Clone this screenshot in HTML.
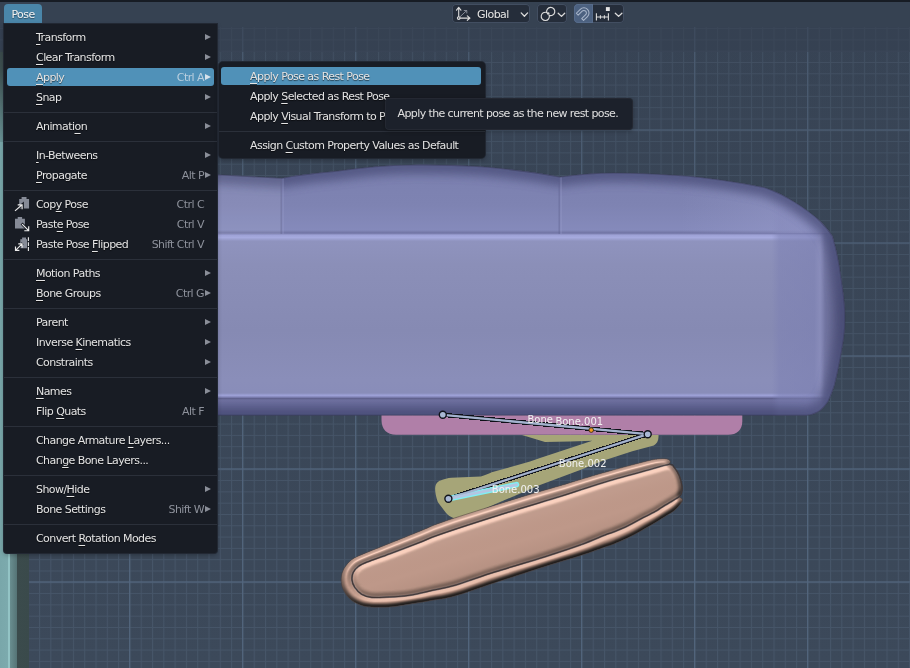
<!DOCTYPE html>
<html lang="en">
<head>
<meta charset="utf-8">
<title>Blender - Pose menu</title>
<style>
html,body{margin:0;padding:0;}
body{width:910px;height:668px;overflow:hidden;position:relative;background:#3a4757;font-family:"DejaVu Sans","Liberation Sans",sans-serif;font-size:11px;letter-spacing:-0.56px;color:#e4e4e4;}
#vp{position:absolute;left:0;top:0;width:910px;height:668px;}
#topband{position:absolute;left:0;top:0;width:910px;height:2px;background:#171c24;}
#hdr{position:absolute;left:0;top:2px;width:910px;height:25px;background:#364252;}
#hdr2{position:absolute;left:0;top:27px;width:910px;height:25px;background:rgba(52,64,80,0.55);}
.pose{position:absolute;left:4px;top:4px;width:38px;height:19px;background:#4a86a9;border-radius:4px 4px 0 0;line-height:22px;text-align:center;color:#f2f2f2;text-shadow:0 1px 1px rgba(0,0,0,.45);}
.menu{position:absolute;background:#181c24;border-radius:0 3px 3px 3px;box-shadow:0 0 0 1px #222833,0 2px 5px rgba(0,0,0,.3);}
#m1{left:4px;top:24px;width:213px;height:529px;border-radius:0 0 3px 3px;}
#m2{left:219px;top:62px;width:266px;height:96px;border-radius:4px;}
.mi{position:absolute;left:3px;width:207px;height:18px;line-height:20px;border-radius:3px;white-space:nowrap;}
.mi .lb{position:absolute;left:29px;top:0px;text-shadow:0 1px 1px rgba(0,0,0,.6);}
.mi.hl{background:#5091b8;}
.mi .sc{position:absolute;right:10px;top:0px;color:#8d919b;}
.mi .sc.na{right:10px;}
.mi.hl .sc{color:#b9cfdf;}
.mi .ar{position:absolute;right:3px;top:6px;width:0;height:0;border-left:6px solid #8a8e98;border-top:3.5px solid transparent;border-bottom:3.5px solid transparent;}
.mi.hl .ar{border-left-color:#d5e2ec;}
.mi .ic{position:absolute;left:8px;top:0px;overflow:visible;}
.mi u{text-decoration:underline;text-underline-offset:3px;text-decoration-thickness:1px;}
.sep{position:absolute;left:0;width:100%;height:1px;background:#2b303a;}
#m2 .mi{left:2px;width:260px;}
#m2 .mi .lb{left:29px;}
#tip{position:absolute;left:384.5px;top:97.5px;width:247.5px;height:31.5px;background:#1c212b;border-radius:4px;box-shadow:inset 0 0 0 1px rgba(255,255,255,.035),0 1px 4px rgba(0,0,0,.3);line-height:32px;letter-spacing:-0.6px;}
#tip span{position:absolute;left:12.5px;top:0px;white-space:nowrap;color:#e0e0e0;}
.w{position:absolute;top:4px;height:19px;background:#252d3a;border-radius:4px;box-shadow:inset 0 0 0 1px #424e61;overflow:hidden;}
.gl{position:absolute;left:477px;top:5px;height:19px;line-height:20px;color:#e6e6e6;text-shadow:0 1px 1px rgba(0,0,0,.4);}
.menu,.pose,.gl,#tip,#vp{will-change:transform;}
</style>
</head>
<body>
<svg id="vp" width="910" height="668" viewBox="0 0 910 668">
<defs>
<linearGradient id="bgG" x1="0" y1="0" x2="0" y2="1"><stop offset="0" stop-color="#374354"/><stop offset="1" stop-color="#3c495a"/></linearGradient>
<linearGradient id="bgFade" x1="0" y1="0" x2="0" y2="1"><stop offset="0" stop-color="#384455" stop-opacity="0.4"/><stop offset="0.75" stop-color="#3b4859" stop-opacity="0"/></linearGradient>
<pattern id="gmin" x="5.1" y="5.5" width="11.3" height="11.3" patternUnits="userSpaceOnUse">
<path d="M0.5 0V11.3M0 0.5H11.3" stroke="#465568" stroke-width="1.1" fill="none"/>
</pattern>
<pattern id="gmaj" x="16.1" y="16.4" width="113" height="113" patternUnits="userSpaceOnUse">
<path d="M0.5 0V113M0 0.5H113" stroke="#53667e" stroke-width="1.3" fill="none"/>
</pattern>
</defs>
<rect width="910" height="668" fill="url(#bgG)"/>
<rect width="910" height="668" fill="url(#gmin)"/>
<rect width="910" height="668" fill="url(#gmaj)"/>
<rect width="910" height="668" fill="url(#bgFade)"/>
<defs>
<linearGradient id="cushV" gradientUnits="userSpaceOnUse" x1="0" y1="164" x2="0" y2="416">
<stop offset="0" stop-color="#7b80ae"/>
<stop offset="0.06" stop-color="#7c81b0"/>
<stop offset="0.16" stop-color="#7e83b2"/>
<stop offset="0.262" stop-color="#858abb"/>
<stop offset="0.274" stop-color="#7073a3"/>
<stop offset="0.282" stop-color="#9ea2d6"/>
<stop offset="0.292" stop-color="#a6aade"/>
<stop offset="0.306" stop-color="#8f93be"/>
<stop offset="0.40" stop-color="#8b8fb8"/>
<stop offset="0.66" stop-color="#868ab3"/>
<stop offset="0.857" stop-color="#8a8eb9"/>
<stop offset="0.909" stop-color="#898db9"/>
<stop offset="0.918" stop-color="#9fa3d9"/>
<stop offset="0.925" stop-color="#8587b8"/>
<stop offset="0.9305" stop-color="#60628e"/>
<stop offset="0.9365" stop-color="#7173a2"/>
<stop offset="0.968" stop-color="#6a6b9a"/>
<stop offset="0.988" stop-color="#5d5e89"/>
<stop offset="0.998" stop-color="#4c4d72"/>
</linearGradient>
<linearGradient id="cushR" gradientUnits="userSpaceOnUse" x1="740" y1="0" x2="846" y2="0">
<stop offset="0.30" stop-color="#7c80b3" stop-opacity="0"/>
<stop offset="0.37" stop-color="#7c80b3" stop-opacity="0.5"/>
<stop offset="0.70" stop-color="#7b7fb2" stop-opacity="0.6"/>
<stop offset="0.755" stop-color="#898cbd" stop-opacity="0.6"/>
<stop offset="0.80" stop-color="#6f729f" stop-opacity="0.85"/>
<stop offset="0.90" stop-color="#5c5e87" stop-opacity="0.92"/>
<stop offset="1" stop-color="#3f405f" stop-opacity="0.97"/>
</linearGradient>
<linearGradient id="cushS" gradientUnits="userSpaceOnUse" x1="680" y1="0" x2="800" y2="0">
<stop offset="0" stop-color="#a3a6d4" stop-opacity="0"/><stop offset="1" stop-color="#a3a6d4" stop-opacity="0.32"/></linearGradient>
<filter id="blur3" filterUnits="userSpaceOnUse" x="0" y="140" width="880" height="300"><feGaussianBlur stdDeviation="5"/></filter>
<clipPath id="cushClip"><path id="cushP" d="M30 176 L218 174.7 L282 178.3 C300 174.5 318 173 336 171.3 C362 167.5 388 165.3 411 165 C436 164.5 460 165.5 482 166.8 C508 169 534 172 560 177 C578 174.5 596 173 614 173 C640 173.2 664 174.5 686 176 C714 178.5 742 183 765 187.7 C776 191.5 786 196.5 795 202.4 C804 208 813 214.5 820 221 C825 226 829 231 832.4 236 C836 248 839 262 840.8 276 C843 290 845 304 845 318 C845 330 843.5 341 841.6 351 C839.5 363 837 375 834.5 385 C832.5 391 830.5 396.5 828 401.5 C825 406 822 409.5 817.7 412 C814.5 413.8 811 414.8 807 415.3 L30 415.3 Z"/></clipPath>
<linearGradient id="peachG" gradientUnits="userSpaceOnUse" x1="500" y1="495" x2="524" y2="575">
<stop offset="0" stop-color="#fff" stop-opacity="0.10"/>
<stop offset="0.35" stop-color="#fff" stop-opacity="0.03"/>
<stop offset="0.6" stop-color="#402a20" stop-opacity="0.0"/>
<stop offset="1" stop-color="#402a20" stop-opacity="0.12"/>
</linearGradient>
<mask id="peachMask" maskUnits="userSpaceOnUse" x="330" y="450" width="360" height="165">
<path d="M341.2 581.4C341.0 578.4 341.4 575.1 342.3 572.4C343.2 569.6 344.6 567.3 346.5 564.9C348.4 562.5 350.4 560.3 353.9 558.2C357.4 556.1 361.4 554.7 367.4 552.2C373.4 549.7 381.2 546.7 389.9 543.2C398.6 539.7 411.4 534.6 419.8 531.2C428.2 527.8 429.6 526.5 440.0 522.9C450.4 519.2 467.9 513.8 481.9 509.3C495.9 504.9 510.8 500.1 523.8 496.2C536.8 492.3 550.4 488.5 560.0 485.7C569.6 482.9 573.8 481.5 581.5 479.2C589.2 476.9 595.2 475.0 606.0 472.0C616.8 469.0 637.0 463.5 646.0 461.3C655.0 459.1 656.4 459.2 660.0 458.8C663.6 458.4 666.0 458.8 667.7 459.2C669.4 459.6 670.0 460.6 670.3 461.5C670.6 462.4 669.1 463.4 669.7 464.3C670.3 465.2 672.2 465.0 673.8 466.9C675.4 468.8 677.8 472.2 679.2 475.4C680.6 478.6 681.6 483.3 682.0 486.2C682.4 489.1 681.9 491.3 681.5 493.0C681.1 494.7 679.3 495.6 679.4 496.6C679.5 497.6 681.9 498.2 682.3 499.2C682.6 500.2 682.7 500.7 681.5 502.5C680.3 504.3 677.4 507.9 675.0 510.0C672.6 512.1 670.3 513.2 667.0 515.3C663.7 517.4 659.4 520.2 655.0 522.8C650.6 525.4 645.5 528.3 640.9 530.9C636.3 533.5 631.9 535.9 627.4 538.1C622.9 540.3 617.7 542.4 614.0 543.9C610.3 545.4 610.4 545.1 605.0 547.0C599.6 548.9 591.5 552.0 581.5 555.3C571.5 558.5 559.4 561.9 545.0 566.5C530.6 571.1 510.0 577.8 495.0 582.7C480.0 587.6 465.7 593.0 455.0 596.0C444.3 599.0 438.0 599.2 431.0 600.5C424.0 601.8 419.0 602.6 413.0 603.6C407.0 604.6 400.1 605.9 395.0 606.5C389.9 607.1 387.0 607.2 382.4 607.2C377.8 607.2 371.6 607.4 367.4 606.8C363.1 606.2 359.9 605.0 356.9 603.6C353.9 602.2 351.7 600.8 349.5 598.6C347.3 596.4 344.9 593.2 343.5 590.3C342.1 587.4 341.4 584.4 341.2 581.4Z" fill="#fff"/>
<path d="M352.0 579.9C351.8 577.4 352.1 574.6 353.2 572.4C354.3 570.1 356.0 568.1 358.4 566.4C360.8 564.6 362.1 564.0 367.4 561.9C372.6 559.8 381.2 557.0 389.9 553.7C398.6 550.5 411.4 545.6 419.8 542.4C428.2 539.2 426.1 539.1 440.0 534.4C453.9 529.6 482.9 520.2 502.9 513.9C522.9 507.6 546.9 500.6 560.0 496.5C573.1 492.4 573.8 492.0 581.5 489.5C589.2 487.0 595.2 484.9 606.0 481.7C616.8 478.5 635.4 473.4 646.0 470.5C656.6 467.6 664.9 464.9 669.5 464.3C674.1 463.7 672.2 465.0 673.8 466.9C675.4 468.8 677.8 472.2 679.2 475.4C680.6 478.6 681.6 483.3 682.0 486.2C682.4 489.1 682.0 491.3 681.5 493.0C681.0 494.7 681.1 495.1 679.2 496.6C677.3 498.2 673.0 500.5 670.0 502.3C667.0 504.1 664.0 505.9 661.5 507.5C659.0 509.1 658.4 509.7 655.0 511.6C651.6 513.5 645.5 516.4 640.9 518.8C636.3 521.2 631.9 523.8 627.4 526.0C622.9 528.2 617.7 530.3 614.0 531.8C610.3 533.3 610.4 532.9 605.0 535.0C599.6 537.1 591.5 540.9 581.5 544.5C571.5 548.1 559.4 552.1 545.0 556.7C530.6 561.3 510.0 567.1 495.0 571.9C480.0 576.6 465.7 582.1 455.0 585.2C444.3 588.3 438.0 589.0 431.0 590.6C424.0 592.2 419.0 593.7 413.0 594.7C407.0 595.7 401.9 596.3 395.0 596.8C388.1 597.2 377.5 597.8 371.9 597.4C366.3 597.0 364.3 595.8 361.4 594.1C358.5 592.4 356.3 589.7 354.7 587.3C353.1 584.9 352.2 582.4 352.0 579.9Z" fill="none" stroke="#000" stroke-opacity="0.55" stroke-width="2"/>
</mask>
<filter id="emboss" filterUnits="userSpaceOnUse" x="330" y="450" width="360" height="165" color-interpolation-filters="sRGB">
<feGaussianBlur in="SourceAlpha" stdDeviation="1.9" result="h"/>
<feDiffuseLighting in="h" surfaceScale="5" diffuseConstant="1" lighting-color="#e2ad97" result="lit0">
<feDistantLight azimuth="255" elevation="60"/>
</feDiffuseLighting>
<feComponentTransfer in="lit0" result="lit1"><feFuncR type="linear" slope="0.8" intercept="0.10"/><feFuncG type="linear" slope="0.8" intercept="0.10"/><feFuncB type="linear" slope="0.8" intercept="0.10"/></feComponentTransfer>
<feSpecularLighting in="h" surfaceScale="5" specularConstant="0.6" specularExponent="20" lighting-color="#fff4ec" result="spec">
<feDistantLight azimuth="255" elevation="42"/>
</feSpecularLighting>
<feComposite in="lit1" in2="spec" operator="arithmetic" k1="0" k2="1" k3="0.3" k4="0" result="lit"/>
<feComposite in="lit" in2="SourceAlpha" operator="in"/>
</filter>
</defs>
<!-- left teal object -->
<defs><linearGradient id="tealG" gradientUnits="userSpaceOnUse" x1="0" y1="0" x2="29" y2="0">
<stop offset="0" stop-color="#79a7aa"/><stop offset="0.262" stop-color="#7caaad"/><stop offset="0.268" stop-color="#93c4c5"/><stop offset="0.33" stop-color="#93c4c5"/><stop offset="0.338" stop-color="#6a8f91"/><stop offset="0.59" stop-color="#557375"/><stop offset="0.6" stop-color="#3b4b4c"/><stop offset="1" stop-color="#3a4a4b"/></linearGradient>
<linearGradient id="tealFade" gradientUnits="userSpaceOnUse" x1="0" y1="48" x2="0" y2="150"><stop offset="0" stop-color="#3a4a4b"/><stop offset="0.2" stop-color="#3d4f50"/><stop offset="1" stop-color="#6f9b9e"/></linearGradient></defs>
<rect x="0" y="140" width="29" height="528" fill="url(#tealG)"/>
<rect x="0" y="50" width="29" height="92" fill="url(#tealFade)"/>
<!-- cushion -->
<g clip-path="url(#cushClip)">
<rect x="0" y="160" width="860" height="260" fill="url(#cushV)"/>
<rect x="740" y="160" width="110" height="260" fill="url(#cushR)"/>
<path d="M680 170L765 187.7L795 202.4L820 221L832.4 233H680Z" fill="url(#cushS)"/>
<use href="#cushP" fill="none" stroke="#4b4f7a" stroke-width="18" opacity="0.8" filter="url(#blur3)"/>
<rect x="30" y="160" width="252" height="74" fill="#fff" opacity="0.07"/>
<path d="M283 178V234M561 177V234" stroke="#a0a3d2" stroke-width="1.4" opacity="0.35"/>
<path d="M281.3 178V234M559.3 177V234" stroke="#5f628f" stroke-width="1.6" opacity="0.4"/>
</g>
<use href="#cushP" fill="none" stroke="#34364f" stroke-width="1.1" opacity="0.5"/>
<!-- pink -->
<path d="M381.5 415.5H742.3V421C742.3 430 737 434.8 728 434.8H396C387 434.8 381.5 429.5 381.5 420Z" fill="#b07fa8"/>
<!-- olive -->
<path d="M522 435H658.5V437C658.5 441 656.5 444 653.8 445.5L632.3 451.2L601.5 461.2L581.5 469.6L540 485L470 515L454 518.2C450 517 447.5 515 445.9 512.8C441.5 507 438.5 503 437.8 502C436 497 435.1 492 435.1 488.5C435.3 485.5 436 484 437 483C438 481.5 439 480.8 440.5 480.4C444 479 448 478 451.3 477.7L480.9 476.4C485 475.5 488 474 491.7 472.3L530 461.6L540 458L592.3 440.7L570 441.5L545 442Z" fill="#a6a578"/>
<!-- peach -->
<g filter="url(#emboss)">
<g mask="url(#peachMask)"><path d="M341.2 581.4C341.0 578.4 341.4 575.1 342.3 572.4C343.2 569.6 344.6 567.3 346.5 564.9C348.4 562.5 350.4 560.3 353.9 558.2C357.4 556.1 361.4 554.7 367.4 552.2C373.4 549.7 381.2 546.7 389.9 543.2C398.6 539.7 411.4 534.6 419.8 531.2C428.2 527.8 429.6 526.5 440.0 522.9C450.4 519.2 467.9 513.8 481.9 509.3C495.9 504.9 510.8 500.1 523.8 496.2C536.8 492.3 550.4 488.5 560.0 485.7C569.6 482.9 573.8 481.5 581.5 479.2C589.2 476.9 595.2 475.0 606.0 472.0C616.8 469.0 637.0 463.5 646.0 461.3C655.0 459.1 656.4 459.2 660.0 458.8C663.6 458.4 666.0 458.8 667.7 459.2C669.4 459.6 670.0 460.6 670.3 461.5C670.6 462.4 669.1 463.4 669.7 464.3C670.3 465.2 672.2 465.0 673.8 466.9C675.4 468.8 677.8 472.2 679.2 475.4C680.6 478.6 681.6 483.3 682.0 486.2C682.4 489.1 681.9 491.3 681.5 493.0C681.1 494.7 679.3 495.6 679.4 496.6C679.5 497.6 681.9 498.2 682.3 499.2C682.6 500.2 682.7 500.7 681.5 502.5C680.3 504.3 677.4 507.9 675.0 510.0C672.6 512.1 670.3 513.2 667.0 515.3C663.7 517.4 659.4 520.2 655.0 522.8C650.6 525.4 645.5 528.3 640.9 530.9C636.3 533.5 631.9 535.9 627.4 538.1C622.9 540.3 617.7 542.4 614.0 543.9C610.3 545.4 610.4 545.1 605.0 547.0C599.6 548.9 591.5 552.0 581.5 555.3C571.5 558.5 559.4 561.9 545.0 566.5C530.6 571.1 510.0 577.8 495.0 582.7C480.0 587.6 465.7 593.0 455.0 596.0C444.3 599.0 438.0 599.2 431.0 600.5C424.0 601.8 419.0 602.6 413.0 603.6C407.0 604.6 400.1 605.9 395.0 606.5C389.9 607.1 387.0 607.2 382.4 607.2C377.8 607.2 371.6 607.4 367.4 606.8C363.1 606.2 359.9 605.0 356.9 603.6C353.9 602.2 351.7 600.8 349.5 598.6C347.3 596.4 344.9 593.2 343.5 590.3C342.1 587.4 341.4 584.4 341.2 581.4Z" fill="#fff"/></g>
</g>
<path d="M341.2 581.4C341.0 578.4 341.4 575.1 342.3 572.4C343.2 569.6 344.6 567.3 346.5 564.9C348.4 562.5 350.4 560.3 353.9 558.2C357.4 556.1 361.4 554.7 367.4 552.2C373.4 549.7 381.2 546.7 389.9 543.2C398.6 539.7 411.4 534.6 419.8 531.2C428.2 527.8 429.6 526.5 440.0 522.9C450.4 519.2 467.9 513.8 481.9 509.3C495.9 504.9 510.8 500.1 523.8 496.2C536.8 492.3 550.4 488.5 560.0 485.7C569.6 482.9 573.8 481.5 581.5 479.2C589.2 476.9 595.2 475.0 606.0 472.0C616.8 469.0 637.0 463.5 646.0 461.3C655.0 459.1 656.4 459.2 660.0 458.8C663.6 458.4 666.0 458.8 667.7 459.2C669.4 459.6 670.0 460.6 670.3 461.5C670.6 462.4 669.1 463.4 669.7 464.3C670.3 465.2 672.2 465.0 673.8 466.9C675.4 468.8 677.8 472.2 679.2 475.4C680.6 478.6 681.6 483.3 682.0 486.2C682.4 489.1 681.9 491.3 681.5 493.0C681.1 494.7 679.3 495.6 679.4 496.6C679.5 497.6 681.9 498.2 682.3 499.2C682.6 500.2 682.7 500.7 681.5 502.5C680.3 504.3 677.4 507.9 675.0 510.0C672.6 512.1 670.3 513.2 667.0 515.3C663.7 517.4 659.4 520.2 655.0 522.8C650.6 525.4 645.5 528.3 640.9 530.9C636.3 533.5 631.9 535.9 627.4 538.1C622.9 540.3 617.7 542.4 614.0 543.9C610.3 545.4 610.4 545.1 605.0 547.0C599.6 548.9 591.5 552.0 581.5 555.3C571.5 558.5 559.4 561.9 545.0 566.5C530.6 571.1 510.0 577.8 495.0 582.7C480.0 587.6 465.7 593.0 455.0 596.0C444.3 599.0 438.0 599.2 431.0 600.5C424.0 601.8 419.0 602.6 413.0 603.6C407.0 604.6 400.1 605.9 395.0 606.5C389.9 607.1 387.0 607.2 382.4 607.2C377.8 607.2 371.6 607.4 367.4 606.8C363.1 606.2 359.9 605.0 356.9 603.6C353.9 602.2 351.7 600.8 349.5 598.6C347.3 596.4 344.9 593.2 343.5 590.3C342.1 587.4 341.4 584.4 341.2 581.4Z" fill="url(#peachG)"/>
<path d="M352.0 579.9C351.8 577.4 352.1 574.6 353.2 572.4C354.3 570.1 356.0 568.1 358.4 566.4C360.8 564.6 362.1 564.0 367.4 561.9C372.6 559.8 381.2 557.0 389.9 553.7C398.6 550.5 411.4 545.6 419.8 542.4C428.2 539.2 426.1 539.1 440.0 534.4C453.9 529.6 482.9 520.2 502.9 513.9C522.9 507.6 546.9 500.6 560.0 496.5C573.1 492.4 573.8 492.0 581.5 489.5C589.2 487.0 595.2 484.9 606.0 481.7C616.8 478.5 635.4 473.4 646.0 470.5C656.6 467.6 664.9 464.9 669.5 464.3C674.1 463.7 672.2 465.0 673.8 466.9C675.4 468.8 677.8 472.2 679.2 475.4C680.6 478.6 681.6 483.3 682.0 486.2C682.4 489.1 682.0 491.3 681.5 493.0C681.0 494.7 681.1 495.1 679.2 496.6C677.3 498.2 673.0 500.5 670.0 502.3C667.0 504.1 664.0 505.9 661.5 507.5C659.0 509.1 658.4 509.7 655.0 511.6C651.6 513.5 645.5 516.4 640.9 518.8C636.3 521.2 631.9 523.8 627.4 526.0C622.9 528.2 617.7 530.3 614.0 531.8C610.3 533.3 610.4 532.9 605.0 535.0C599.6 537.1 591.5 540.9 581.5 544.5C571.5 548.1 559.4 552.1 545.0 556.7C530.6 561.3 510.0 567.1 495.0 571.9C480.0 576.6 465.7 582.1 455.0 585.2C444.3 588.3 438.0 589.0 431.0 590.6C424.0 592.2 419.0 593.7 413.0 594.7C407.0 595.7 401.9 596.3 395.0 596.8C388.1 597.2 377.5 597.8 371.9 597.4C366.3 597.0 364.3 595.8 361.4 594.1C358.5 592.4 356.3 589.7 354.7 587.3C353.1 584.9 352.2 582.4 352.0 579.9Z" fill="none" stroke="#3a2e2b" stroke-width="1.15" opacity="0.85"/>
<path d="M341.2 581.4C341.0 578.4 341.4 575.1 342.3 572.4C343.2 569.6 344.6 567.3 346.5 564.9C348.4 562.5 350.4 560.3 353.9 558.2C357.4 556.1 361.4 554.7 367.4 552.2C373.4 549.7 381.2 546.7 389.9 543.2C398.6 539.7 411.4 534.6 419.8 531.2C428.2 527.8 429.6 526.5 440.0 522.9C450.4 519.2 467.9 513.8 481.9 509.3C495.9 504.9 510.8 500.1 523.8 496.2C536.8 492.3 550.4 488.5 560.0 485.7C569.6 482.9 573.8 481.5 581.5 479.2C589.2 476.9 595.2 475.0 606.0 472.0C616.8 469.0 637.0 463.5 646.0 461.3C655.0 459.1 656.4 459.2 660.0 458.8C663.6 458.4 666.0 458.8 667.7 459.2C669.4 459.6 670.0 460.6 670.3 461.5C670.6 462.4 669.1 463.4 669.7 464.3C670.3 465.2 672.2 465.0 673.8 466.9C675.4 468.8 677.8 472.2 679.2 475.4C680.6 478.6 681.6 483.3 682.0 486.2C682.4 489.1 681.9 491.3 681.5 493.0C681.1 494.7 679.3 495.6 679.4 496.6C679.5 497.6 681.9 498.2 682.3 499.2C682.6 500.2 682.7 500.7 681.5 502.5C680.3 504.3 677.4 507.9 675.0 510.0C672.6 512.1 670.3 513.2 667.0 515.3C663.7 517.4 659.4 520.2 655.0 522.8C650.6 525.4 645.5 528.3 640.9 530.9C636.3 533.5 631.9 535.9 627.4 538.1C622.9 540.3 617.7 542.4 614.0 543.9C610.3 545.4 610.4 545.1 605.0 547.0C599.6 548.9 591.5 552.0 581.5 555.3C571.5 558.5 559.4 561.9 545.0 566.5C530.6 571.1 510.0 577.8 495.0 582.7C480.0 587.6 465.7 593.0 455.0 596.0C444.3 599.0 438.0 599.2 431.0 600.5C424.0 601.8 419.0 602.6 413.0 603.6C407.0 604.6 400.1 605.9 395.0 606.5C389.9 607.1 387.0 607.2 382.4 607.2C377.8 607.2 371.6 607.4 367.4 606.8C363.1 606.2 359.9 605.0 356.9 603.6C353.9 602.2 351.7 600.8 349.5 598.6C347.3 596.4 344.9 593.2 343.5 590.3C342.1 587.4 341.4 584.4 341.2 581.4Z" fill="none" stroke="#4e3f3b" stroke-width="1" opacity="0.55"/>
<!-- bones -->
<g fill="none" stroke-linecap="butt">
<g shape-rendering="crispEdges">
<path d="M442.8 414.8L647.7 434.2" stroke="#0d0f16" stroke-width="4.4"/>
<path d="M647.7 434.2L448.4 498.6" stroke="#0d0f16" stroke-width="4.4"/>
</g>
<path d="M448.4 498.8L516.5 484.7" stroke="#7ff0f4" stroke-width="5.6" stroke-linecap="round"/>
<path d="M442.8 414.8L647.7 434.2" stroke="#a4b3cf" stroke-width="2.3"/>
<path d="M647.7 434.2L448.4 498.6" stroke="#a4b3cf" stroke-width="2.3"/>
<path d="M448.4 498.8L516.5 484.7" stroke="#b4c6e2" stroke-width="2.8" stroke-linecap="round"/>
</g>
<circle cx="442.8" cy="414.8" r="3.5" fill="#a9b8d4" stroke="#10131b" stroke-width="1.4"/>
<circle cx="647.7" cy="434.2" r="3.5" fill="#a9b8d4" stroke="#10131b" stroke-width="1.4"/>
<circle cx="448.4" cy="498.8" r="3.5" fill="#a9b8d4" stroke="#10131b" stroke-width="1.4"/>
<circle cx="591.2" cy="430.1" r="2.3" fill="#f39a1e" stroke="#3a2a12" stroke-width="0.9"/>
<g font-family="'DejaVu Sans','Liberation Sans',sans-serif" font-size="10" fill="#f2f2f2" letter-spacing="0" style="letter-spacing:0">
<text x="527.5" y="422.7">Bone</text>
<text x="555.4" y="424.7">Bone.001</text>
<text x="558.8" y="466.5">Bone.002</text>
<text x="491.8" y="493.1">Bone.003</text>
</g>

</svg>
<div id="hdr2"></div>
<div id="hdr"></div>
<div id="topband"></div>
<div class="w" style="left:452px;width:78px;"></div>
<div class="w" style="left:537px;width:30px;"></div>
<div class="w" style="left:574px;width:50px;"><div style="position:absolute;left:0;top:0;width:18.5px;height:19px;background:#4c6180;border-radius:4px 0 0 4px;box-shadow:inset 0 0 0 1px #566b8a;"></div></div>
<div class="gl">Global</div>
<svg id="hicons" width="910" height="28" viewBox="0 0 910 28" style="position:absolute;left:0;top:0">
<g fill="none" stroke="#dcdcdc" stroke-width="1.1" stroke-linecap="round" stroke-linejoin="round">
<!-- orientation icon -->
<path d="M458.7 16.7V7.6M456.5 10.2L458.7 7.4L460.9 10.2"/>
<path d="M460 18.1H469.8M467.3 15.9L470 18.1L467.3 20.3"/>
<circle cx="458.7" cy="18.1" r="1.3"/>
<path d="M460 16.8L466.6 10.6M464.2 10.5H466.8V13" stroke="#8e949f" stroke-width="0.9"/>
<!-- chevrons -->
<path d="M521.2 12.9L524.4 16.2L527.6 12.9" stroke-width="1.3"/>
<path d="M558.2 13.2L561.5 16.4L564.7 13.2" stroke-width="1.3"/>
<path d="M615.3 13.2L618.6 16.4L621.9 13.2" stroke-width="1.3"/>
<!-- link icon -->
<path d="M549.26 15.34A4.1 4.1 0 1 0 546.74 12.56" stroke-width="1.15"/>
<path d="M549.26 15.34A4.1 4.1 0 1 1 546.74 12.56" stroke-width="1.15"/>
<circle cx="548.2" cy="13.5" r="1.3" fill="#dcdcdc" stroke="none"/>
<!-- magnet -->
<g transform="translate(583.9 12.9) rotate(45)" stroke="#a9b6ca" stroke-width="1.05">
<path d="M-5.1 5.6V0A5.1 5.1 0 0 1 5.1 0V5.6H2.5V0A2.5 2.5 0 0 0 -2.5 0V5.6Z"/>
</g>
<!-- snap increment -->
<path d="M596.4 17H608.4M596.4 13.3V20.4M608.4 13.3V20.4M600.4 15.3V18.7M604.4 15.3V18.7" stroke-width="1.1" stroke-linecap="butt"/>
<rect x="605.9" y="7.1" width="3.9" height="3.9" fill="#e6e6e6" stroke="none"/>
</g>
</svg>

<div class="pose">Pose</div>
<div class="menu" id="m1">
<div class="mi" style="top:4px"><span class="lb"><u>T</u>ransform</span><i class="ar"></i></div>
<div class="mi" style="top:24px"><span class="lb"><u>C</u>lear Transform</span><i class="ar"></i></div>
<div class="mi hl" style="top:44px"><span class="lb"><u>A</u>pply</span><span class="sc">Ctrl A</span><i class="ar"></i></div>
<div class="mi" style="top:64px"><span class="lb"><u>S</u>nap</span><i class="ar"></i></div>
<div class="sep" style="top:88px"></div>
<div class="mi" style="top:93px"><span class="lb">Animati<u>o</u>n</span><i class="ar"></i></div>
<div class="sep" style="top:117px"></div>
<div class="mi" style="top:122px"><span class="lb"><u>I</u>n-Betweens</span><i class="ar"></i></div>
<div class="mi" style="top:142px"><span class="lb"><u>P</u>ropagate</span><span class="sc">Alt P</span><i class="ar"></i></div>
<div class="sep" style="top:166px"></div>
<div class="mi" style="top:171px"><svg class="ic" width="18" height="18" viewBox="0 0 18 18"><path d="M4.2 4H6.6V2.1H11.5V4H14.05V13.5H4.2Z" fill="#868b97"/><path d="M-0.2 16.1L7.6 9.3V15.2H8.4" stroke="#181c24" stroke-width="2.6" fill="none"/><path d="M0 15.9L6.8 10M2.7 9.8H7.1V14.2" stroke="#ececec" stroke-width="1.15" fill="none"/></svg><span class="lb">Cop<u>y</u> Pose</span><span class="sc na">Ctrl C</span></div>
<div class="mi" style="top:191px"><svg class="ic" width="18" height="18" viewBox="0 0 18 18"><path d="M0 3.8H2.7V1.9H7.1V3.8H9.9V13.5H0Z" fill="#868b97"/><path d="M6.6 8.6L13.7 15.7" stroke="#181c24" stroke-width="2.8" fill="none"/><path d="M7.1 9.1L13.4 15.4M13.7 11.3V15.7H9.3" stroke="#ececec" stroke-width="1.15" fill="none"/></svg><span class="lb">Past<u>e</u> Pose</span><span class="sc na">Ctrl V</span></div>
<div class="mi" style="top:211px"><svg class="ic" width="18" height="18" viewBox="0 0 18 18"><path d="M5.3 4.2H7.1V2.5H11V4.2H12.1V13.2H5.3Z" fill="#868b97"/><path d="M13.4 2.3V16" stroke="#ececec" stroke-width="1.1" stroke-dasharray="3.8 1.1" fill="none"/><path d="M0 16L7.6 8.3" stroke="#181c24" stroke-width="2.8" fill="none"/><path d="M0.8 15.1L6.8 9.1M3.3 8.8H7.1V12.7M0.5 11.6V15.4H4.4" stroke="#ececec" stroke-width="1.15" fill="none"/></svg><span class="lb">Paste Pose <u>F</u>lipped</span><span class="sc na">Shift Ctrl V</span></div>
<div class="sep" style="top:235px"></div>
<div class="mi" style="top:240px"><span class="lb"><u>M</u>otion Paths</span><i class="ar"></i></div>
<div class="mi" style="top:260px"><span class="lb"><u>B</u>one Groups</span><span class="sc">Ctrl G</span><i class="ar"></i></div>
<div class="sep" style="top:284px"></div>
<div class="mi" style="top:289px"><span class="lb">Parent</span><i class="ar"></i></div>
<div class="mi" style="top:309px"><span class="lb">Inverse <u>K</u>inematics</span><i class="ar"></i></div>
<div class="mi" style="top:329px"><span class="lb">Constraints</span><i class="ar"></i></div>
<div class="sep" style="top:353px"></div>
<div class="mi" style="top:358px"><span class="lb"><u>N</u>ames</span><i class="ar"></i></div>
<div class="mi" style="top:378px"><span class="lb">Flip <u>Q</u>uats</span><span class="sc na">Alt F</span></div>
<div class="sep" style="top:402px"></div>
<div class="mi" style="top:407px"><span class="lb">Change Armature <u>L</u>ayers...</span></div>
<div class="mi" style="top:427px"><span class="lb">Chan<u>g</u>e Bone Layers...</span></div>
<div class="sep" style="top:451px"></div>
<div class="mi" style="top:456px"><span class="lb">Show/<u>H</u>ide</span><i class="ar"></i></div>
<div class="mi" style="top:476px"><span class="lb">Bone Settings</span><span class="sc">Shift W</span><i class="ar"></i></div>
<div class="sep" style="top:500px"></div>
<div class="mi" style="top:505px"><span class="lb">Convert <u>R</u>otation Modes</span></div>
</div>
<div class="menu" id="m2">
<div class="mi hl" style="top:5px"><span class="lb"><u>A</u>pply Pose as Rest Pose</span></div>
<div class="mi" style="top:25px"><span class="lb">Apply <u>S</u>elected as Rest Pose</span></div>
<div class="mi" style="top:45px"><span class="lb">Apply <u>V</u>isual Transform to Pose</span></div>
<div class="sep" style="top:69px"></div>
<div class="mi" style="top:74px"><span class="lb">Assign <u>C</u>ustom Property Values as Default</span></div>
</div>
<div id="tip"><span>Apply the current pose as the new rest pose.</span></div>
</body>
</html>
